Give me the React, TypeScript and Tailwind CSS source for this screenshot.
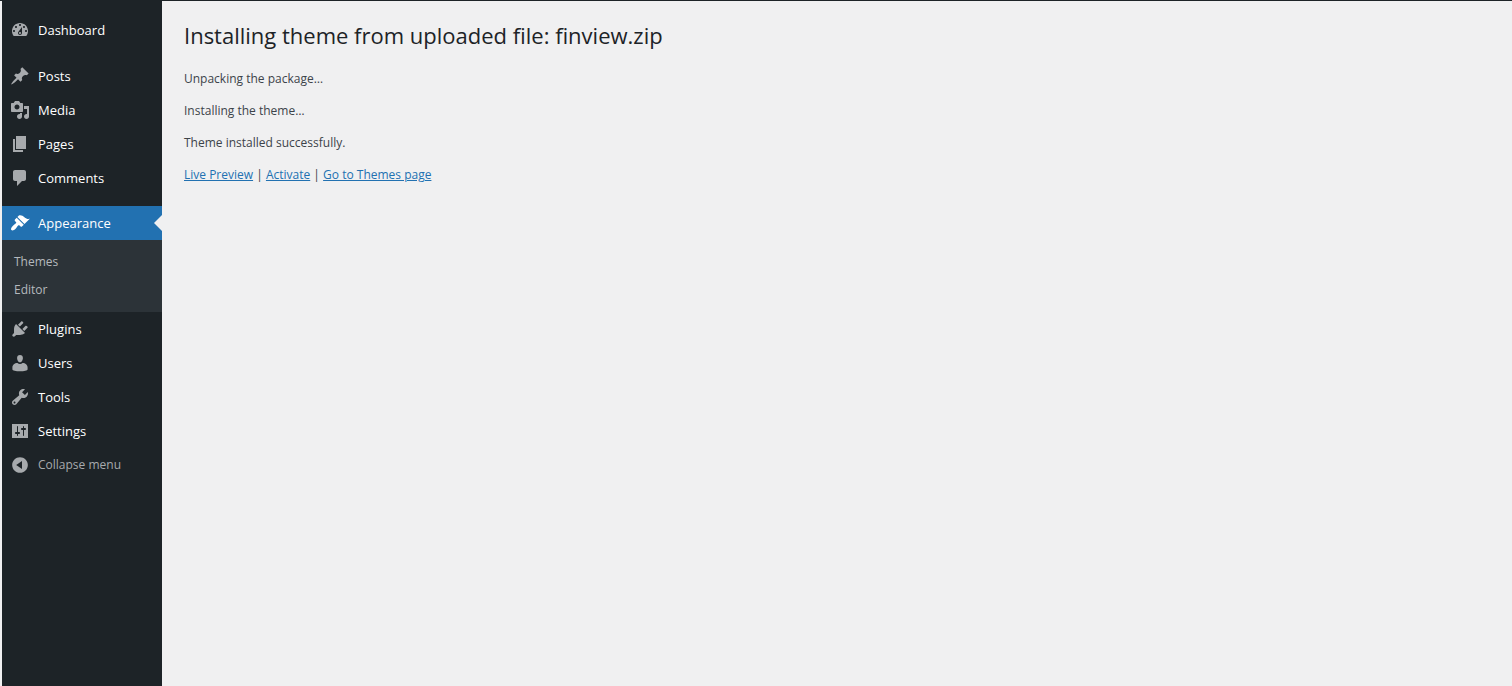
import React from "react";

const icons = {
  dashboard:
    "M3.76 16h12.48c1.1-1.37 1.76-3.11 1.76-5 0-4.42-3.58-8-8-8s-8 3.58-8 8c0 1.89.66 3.63 1.76 5zM10 4c.55 0 1 .45 1 1s-.45 1-1 1-1-.45-1-1 .45-1 1-1zM6 6c.55 0 1 .45 1 1s-.45 1-1 1-1-.45-1-1 .45-1 1-1zm8 0c.55 0 1 .45 1 1s-.45 1-1 1-1-.45-1-1 .45-1 1-1zm-5.37 5.55L12 7v6c0 1.1-.9 2-2 2s-2-.9-2-2c0-.57.24-1.08.63-1.45zM4 10c.55 0 1 .45 1 1s-.45 1-1 1-1-.45-1-1 .45-1 1-1zm12 0c.55 0 1 .45 1 1s-.45 1-1 1-1-.45-1-1 .45-1 1-1zm-5 3c0-.55-.45-1-1-1s-1 .45-1 1 .45 1 1 1 1-.45 1-1z",
  posts:
    "M10.44 3.02l1.82-1.82 6.36 6.35-1.83 1.82c-1.05-.68-2.48-.57-3.41.36l-.75.75c-.92.93-1.04 2.35-.35 3.41l-1.83 1.82-2.41-2.41-2.8 2.79c-.42.42-3.38 2.71-3.8 2.29s1.86-3.39 2.28-3.81l2.79-2.79L4.1 9.36l1.83-1.82c1.05.69 2.48.57 3.4-.36l.75-.75c.93-.92 1.05-2.35.36-3.41z",
  media:
    "M13 11V4c0-.55-.45-1-1-1h-1.67L9 1H5L3.67 3H2c-.55 0-1 .45-1 1v7c0 .55.45 1 1 1h10c.55 0 1-.45 1-1zM7 4.5c1.38 0 2.5 1.12 2.5 2.5S8.38 9.5 7 9.5 4.5 8.38 4.5 7 5.62 4.5 7 4.5zM14 6h5v10.5c0 1.38-1.12 2.5-2.5 2.5S14 17.88 14 16.5s1.12-2.5 2.5-2.5c.17 0 .34.02.5.05V9h-3V6zm-4 8.05V13h2v3.5c0 1.38-1.12 2.5-2.5 2.5S7 17.88 7 16.5 8.12 14 9.5 14c.17 0 .34.02.5.05z",
  pages: "M6 15V2h10v13H6zm-1 1h8v2H3V5h2v11z",
  comments:
    "M5 2h9c1.1 0 2 .9 2 2v7c0 1.1-.9 2-2 2h-2l-5 5v-5H5c-1.1 0-2-.9-2-2V4c0-1.1.9-2 2-2z",
  appearance:
    "M14.48 11.06L7.41 3.99l1.5-1.5c.5-.56 2.3-.47 3.51.32 1.21.8 1.43 1.28 2.91 2.1 1.18.64 2.45 1.26 4.45.85zm-.71.71L6.7 4.7 4.93 6.47c-.39.39-.39 1.02 0 1.41l1.06 1.06c.39.39.39 1.03 0 1.42-.6.6-1.43 1.11-2.21 1.69-.35.26-.7.53-1.01.84C1.43 14.23.4 16.08 1.4 17.07c.99 1 2.84-.03 4.18-1.36.31-.31.58-.66.85-1.02.57-.78 1.08-1.61 1.69-2.21.39-.39 1.02-.39 1.41 0l1.06 1.06c.39.39 1.02.39 1.41 0z",
  plugins:
    "M13.11 4.36L9.87 7.6 8 5.73l3.24-3.24c.35-.34 1.05-.2 1.56.32.52.51.66 1.21.31 1.55zm-8 1.77l.91-1.12 9.01 9.01-1.19.84c-.71.71-2.63 1.16-3.82 1.16H6.14L4.9 17.26c-.59.59-1.54.59-2.12 0-.59-.58-.59-1.53 0-2.12l1.24-1.24v-3.88c0-1.13.4-3.19 1.09-3.89zm7.26 3.97l3.24-3.24c.34-.35 1.04-.21 1.55.31.52.51.66 1.21.31 1.55l-3.24 3.25z",
  users:
    "M10 9.25c-2.27 0-2.9-3.2-2.9-4.3C7.1 3.1 8.1 2 10 2s2.9 1.1 2.9 2.95c0 1.1-.63 4.3-2.9 4.3zm0 1.75c1 0 1.9-.4 2.5-1 2.9 0 5.1 2.1 5.1 4.5v1.9c0 .9-3.6 1.8-7.6 1.8s-7.6-.9-7.6-1.8v-1.9C2.4 12.1 4.6 10 7.5 10c.6.6 1.5 1 2.5 1z",
  tools:
    "M16.68 9.77c-1.34 1.34-3.3 1.67-4.95.99l-5.41 6.52c-.99.99-2.59.99-3.58 0s-.99-2.59 0-3.57l6.52-5.42c-.68-1.65-.35-3.61.99-4.95 1.28-1.28 3.12-1.62 4.72-1.06l-2.89 2.89 2.82 2.82 2.86-2.87c.53 1.58.18 3.39-1.08 4.65zM3.81 16.21c.4.39 1.04.39 1.43 0 .4-.4.4-1.04 0-1.43-.39-.4-1.03-.4-1.43 0-.39.39-.39 1.03 0 1.43z",
  settings:
    "M18 17V3H2v14h16zM8 11h1c.55 0 1 .45 1 1s-.45 1-1 1H8v1.5c0 .28-.22.5-.5.5s-.5-.22-.5-.5V13H6c-.55 0-1-.45-1-1s.45-1 1-1h1V5.5c0-.28.22-.5.5-.5s.5.22.5.5V11zm5-2h-1c-.55 0-1-.45-1-1s.45-1 1-1h1V5.5c0-.28.22-.5.5-.5s.5.22.5.5V7h1c.55 0 1 .45 1 1s-.45 1-1 1h-1v5.5c0 .28-.22.5-.5.5s-.5-.22-.5-.5V9z",
  collapse:
    "M10 2.16c4.33 0 7.84 3.51 7.84 7.84s-3.51 7.84-7.84 7.84S2.16 14.33 2.16 10 5.71 2.16 10 2.16zm2 11.72V6.12L6.18 9.97z",
};

type IconName = keyof typeof icons;

function Icon({ name }: { name: IconName }) {
  return (
    <svg viewBox="0 0 20 20" className="size-5 shrink-0 fill-current" fillRule="evenodd" aria-hidden="true">
      <path d={icons[name]} />
    </svg>
  );
}

function MenuItem({ icon, label }: { icon: IconName; label: string }) {
  return (
    <li>
      <a href="#" className="flex h-[34px] items-center gap-2 px-2 text-[#a7aaad]">
        <Icon name={icon} />
        <span className="text-white">{label}</span>
      </a>
    </li>
  );
}

function Sidebar() {
  return (
    <nav aria-label="Main menu" className="w-40 shrink-0 bg-[#1d2327] pt-3 text-[13px] leading-[18px]">
      <ul>
        <MenuItem icon="dashboard" label="Dashboard" />
      </ul>
      <ul className="mt-3">
        <MenuItem icon="posts" label="Posts" />
        <MenuItem icon="media" label="Media" />
        <MenuItem icon="pages" label="Pages" />
        <MenuItem icon="comments" label="Comments" />
      </ul>
      <ul className="mt-[11px]">
        <li>
          <a
            href="#"
            aria-current="page"
            className="relative flex h-[34px] items-center gap-2 bg-[#2271b1] px-2 text-white"
          >
            <Icon name="appearance" />
            <span>Appearance</span>
            <span className="absolute top-1/2 right-0 -translate-y-1/2 border-8 border-l-0 border-transparent border-r-[#f0f0f1]" />
          </a>
          <ul className="bg-[#2c3338] py-2 text-[12px] text-[#b5b9bd]">
            <li>
              <a href="#" className="flex h-7 items-center px-3">Themes</a>
            </li>
            <li>
              <a href="#" className="flex h-7 items-center px-3">Editor</a>
            </li>
          </ul>
        </li>
        <MenuItem icon="plugins" label="Plugins" />
        <MenuItem icon="users" label="Users" />
        <MenuItem icon="tools" label="Tools" />
        <MenuItem icon="settings" label="Settings" />
        <li>
          <button type="button" className="flex h-[34px] w-full items-center gap-2 px-2 text-[12px] text-[#a7aaad]">
            <Icon name="collapse" />
            <span>Collapse menu</span>
          </button>
        </li>
      </ul>
    </nav>
  );
}

export default function App() {
  return (
    <div className="flex min-h-screen border-t border-[#1d2327] bg-[#f0f0f1] pl-0.5 font-['Open_Sans','Noto_Sans',sans-serif]">
      <Sidebar />
      <main className="min-w-0 flex-1 px-[22px] pt-5 text-[12px] leading-5 text-[#3c434a]">
        <h1 className="text-[22px] leading-7 text-[#1d2327]">
          Installing theme from uploaded file: finview.zip
        </h1>
        <div className="mt-5 flex flex-col gap-3">
          <p>Unpacking the package…</p>
          <p>Installing the theme…</p>
          <p>Theme installed successfully.</p>
          <p>
            <a href="#" className="text-[#2271b1] underline">Live Preview</a> |{" "}
            <a href="#" className="text-[#2271b1] underline">Activate</a> |{" "}
            <a href="#" className="text-[#2271b1] underline">Go to Themes page</a>
          </p>
        </div>
      </main>
    </div>
  );
}
